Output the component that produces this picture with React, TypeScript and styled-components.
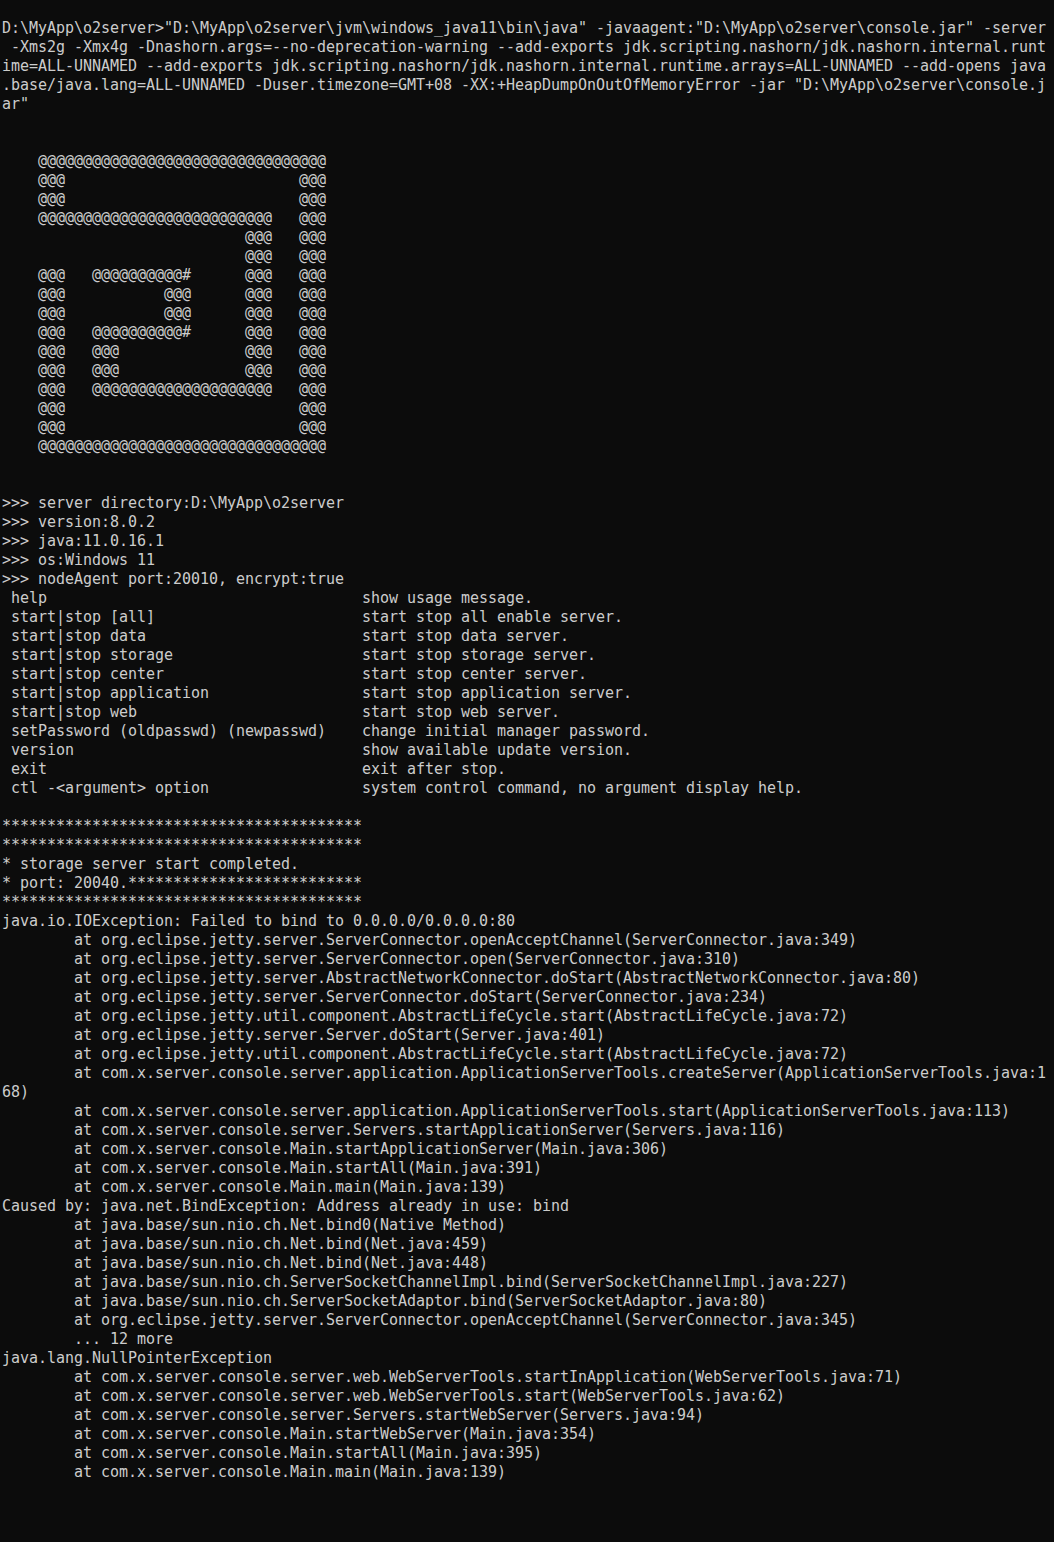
import { Fragment } from 'react'
import styled, { createGlobalStyle } from 'styled-components'

const GlobalStyle = createGlobalStyle`
  html, body {
    margin: 0;
    padding: 0;
    background: #0c0c0c;
  }
`

const COL = 9

const Screen = styled.div`
  min-height: 1542px;
  box-sizing: border-box;
  padding: 19px 0 0 2px;
  background: #0c0c0c;
  color: #cccccc;
  font-family: 'DejaVu Sans Mono', 'Liberation Mono', monospace;
  font-size: 15px;
  letter-spacing: -0.03px;
  line-height: 19px;
  overflow: hidden;
`

const Line = styled.div`
  height: 19px;
  white-space: pre;
`

const Gap = styled.div<{ $rows: number }>`
  height: ${p => p.$rows * 19}px;
`

const Banner = styled.div`
  white-space: pre;
`

const HelpTable = styled.div`
  display: grid;
  grid-template-columns: ${COL * 39}px 1fr;
  grid-auto-rows: 19px;
  padding-left: ${COL}px;
  white-space: pre;
`

const Frame = styled.div`
  height: 19px;
  padding-left: ${COL * 8}px;
  white-space: pre;
`

const command = [
  'D:\\MyApp\\o2server>"D:\\MyApp\\o2server\\jvm\\windows_java11\\bin\\java" -javaagent:"D:\\MyApp\\o2server\\console.jar" -server',
  ' -Xms2g -Xmx4g -Dnashorn.args=--no-deprecation-warning --add-exports jdk.scripting.nashorn/jdk.nashorn.internal.runt',
  'ime=ALL-UNNAMED --add-exports jdk.scripting.nashorn/jdk.nashorn.internal.runtime.arrays=ALL-UNNAMED --add-opens java',
  '.base/java.lang=ALL-UNNAMED -Duser.timezone=GMT+08 -XX:+HeapDumpOnOutOfMemoryError -jar "D:\\MyApp\\o2server\\console.j',
  'ar"',
]

const at = (n: number) => '@'.repeat(n)
const sp = (n: number) => ' '.repeat(n)

const edge = `${sp(4)}${at(32)}`
const sides = `${sp(4)}@@@${sp(26)}@@@`
const hashBar = `${sp(4)}@@@${sp(3)}${at(10)}#${sp(6)}@@@${sp(3)}@@@`
const midRight = `${sp(4)}@@@${sp(11)}@@@${sp(6)}@@@${sp(3)}@@@`
const midLeft = `${sp(4)}@@@${sp(3)}@@@${sp(14)}@@@${sp(3)}@@@`

const logo = [
  edge,
  sides,
  sides,
  `${sp(4)}${at(26)}${sp(3)}@@@`,
  `${sp(27)}@@@${sp(3)}@@@`,
  `${sp(27)}@@@${sp(3)}@@@`,
  hashBar,
  midRight,
  midRight,
  hashBar,
  midLeft,
  midLeft,
  `${sp(4)}@@@${sp(3)}${at(20)}${sp(3)}@@@`,
  sides,
  sides,
  edge,
]

const info = [
  '>>> server directory:D:\\MyApp\\o2server',
  '>>> version:8.0.2',
  '>>> java:11.0.16.1',
  '>>> os:Windows 11',
  '>>> nodeAgent port:20010, encrypt:true',
]

const help: [string, string][] = [
  ['help', 'show usage message.'],
  ['start|stop [all]', 'start stop all enable server.'],
  ['start|stop data', 'start stop data server.'],
  ['start|stop storage', 'start stop storage server.'],
  ['start|stop center', 'start stop center server.'],
  ['start|stop application', 'start stop application server.'],
  ['start|stop web', 'start stop web server.'],
  ['setPassword (oldpasswd) (newpasswd)', 'change initial manager password.'],
  ['version', 'show available update version.'],
  ['exit', 'exit after stop.'],
  ['ctl -<argument> option', 'system control command, no argument display help.'],
]

const stars = '*'.repeat(40)

type TraceLine = { text: string; frame?: boolean }

const f = (text: string): TraceLine => ({ text, frame: true })
const h = (text: string): TraceLine => ({ text })

const trace: TraceLine[] = [
  h('java.io.IOException: Failed to bind to 0.0.0.0/0.0.0.0:80'),
  f('at org.eclipse.jetty.server.ServerConnector.openAcceptChannel(ServerConnector.java:349)'),
  f('at org.eclipse.jetty.server.ServerConnector.open(ServerConnector.java:310)'),
  f('at org.eclipse.jetty.server.AbstractNetworkConnector.doStart(AbstractNetworkConnector.java:80)'),
  f('at org.eclipse.jetty.server.ServerConnector.doStart(ServerConnector.java:234)'),
  f('at org.eclipse.jetty.util.component.AbstractLifeCycle.start(AbstractLifeCycle.java:72)'),
  f('at org.eclipse.jetty.server.Server.doStart(Server.java:401)'),
  f('at org.eclipse.jetty.util.component.AbstractLifeCycle.start(AbstractLifeCycle.java:72)'),
  f('at com.x.server.console.server.application.ApplicationServerTools.createServer(ApplicationServerTools.java:1'),
  h('68)'),
  f('at com.x.server.console.server.application.ApplicationServerTools.start(ApplicationServerTools.java:113)'),
  f('at com.x.server.console.server.Servers.startApplicationServer(Servers.java:116)'),
  f('at com.x.server.console.Main.startApplicationServer(Main.java:306)'),
  f('at com.x.server.console.Main.startAll(Main.java:391)'),
  f('at com.x.server.console.Main.main(Main.java:139)'),
  h('Caused by: java.net.BindException: Address already in use: bind'),
  f('at java.base/sun.nio.ch.Net.bind0(Native Method)'),
  f('at java.base/sun.nio.ch.Net.bind(Net.java:459)'),
  f('at java.base/sun.nio.ch.Net.bind(Net.java:448)'),
  f('at java.base/sun.nio.ch.ServerSocketChannelImpl.bind(ServerSocketChannelImpl.java:227)'),
  f('at java.base/sun.nio.ch.ServerSocketAdaptor.bind(ServerSocketAdaptor.java:80)'),
  f('at org.eclipse.jetty.server.ServerConnector.openAcceptChannel(ServerConnector.java:345)'),
  f('... 12 more'),
  h('java.lang.NullPointerException'),
  f('at com.x.server.console.server.web.WebServerTools.startInApplication(WebServerTools.java:71)'),
  f('at com.x.server.console.server.web.WebServerTools.start(WebServerTools.java:62)'),
  f('at com.x.server.console.server.Servers.startWebServer(Servers.java:94)'),
  f('at com.x.server.console.Main.startWebServer(Main.java:354)'),
  f('at com.x.server.console.Main.startAll(Main.java:395)'),
  f('at com.x.server.console.Main.main(Main.java:139)'),
]

export default function App() {
  return (
    <>
      <GlobalStyle />
      <Screen>
        {command.map((l, i) => (
          <Line key={i}>{l}</Line>
        ))}
        <Gap $rows={2} />
        <Banner>
          {logo.map((l, i) => (
            <Line key={i}>{l}</Line>
          ))}
        </Banner>
        <Gap $rows={2} />
        {info.map((l, i) => (
          <Line key={i}>{l}</Line>
        ))}
        <HelpTable>
          {help.map(([cmd, desc]) => (
            <Fragment key={cmd}>
              <span>{cmd}</span>
              <span>{desc}</span>
            </Fragment>
          ))}
        </HelpTable>
        <Gap $rows={1} />
        <Line>{stars}</Line>
        <Line>{stars}</Line>
        <Line>* storage server start completed.</Line>
        <Line>{'* port: 20040.' + '*'.repeat(26)}</Line>
        <Line>{stars}</Line>
        {trace.map((t, i) =>
          t.frame ? <Frame key={i}>{t.text}</Frame> : <Line key={i}>{t.text}</Line>
        )}
      </Screen>
    </>
  )
}
